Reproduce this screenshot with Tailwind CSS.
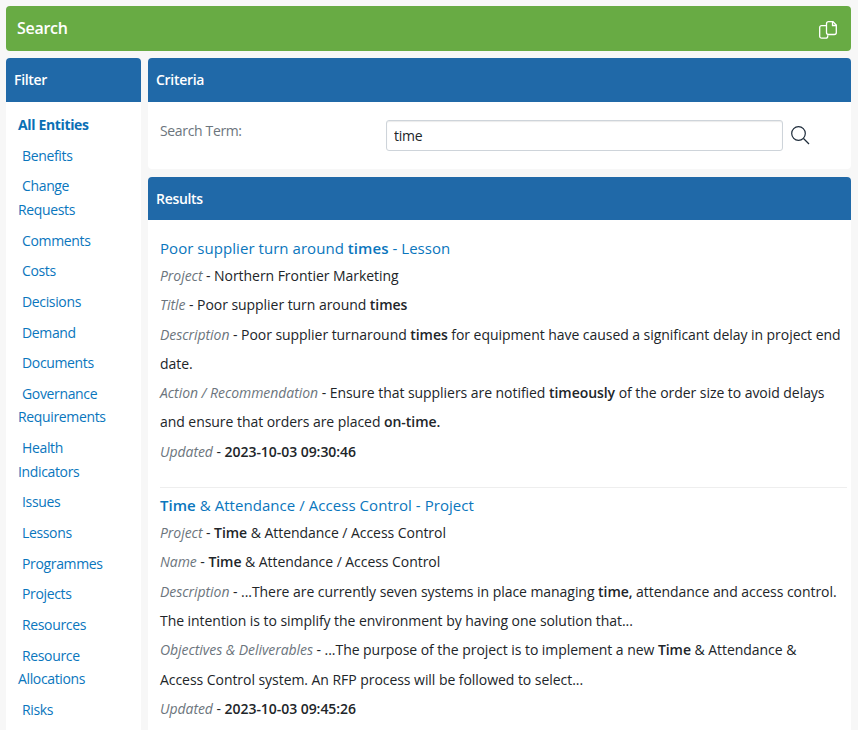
<!DOCTYPE html>
<html lang="en">
  <head>
    <meta charset="UTF-8" />
    <script src="https://cdn.jsdelivr.net/npm/@tailwindcss/browser@4"></script>
    <title>Search</title>
  </head>
  <body class="bg-[#f7f7f7] h-[730px] overflow-hidden font-['Open_Sans',sans-serif] text-[14px] text-[#212529]">
    <div class="pt-[6px] pl-[6px] w-[851px]">
      <!-- page title -->
      <div class="h-[45px] bg-[#68ab44] rounded-[4px] flex items-center justify-between pl-[11px] pr-[14px] text-white">
        <span class="text-[16px] font-semibold tracking-[-0.3px] -mt-[1px]">Search</span>
        <svg class="mt-[3px]" width="18" height="18" viewBox="0 0 18 18" fill="none" stroke="#fff" stroke-width="1.3">
          <path d="M7 4.700H2.500a1.800 1.800 0 0 0-1.800 1.800v8.700a2 2 0 0 0 2 2h4a2 2 0 0 0 2-2v-1" />
          <path d="M9.500 0.700H14l3.300 3.300v7.500a2 2 0 0 1-2 2H9.500a2 2 0 0 1-2-2V2.700a2 2 0 0 1 2-2z" />
          <path d="M13.500 0.700V4.500h3.800" />
        </svg>
      </div>

      <div class="flex gap-[7px] mt-[7px]">
        <!-- filter -->
        <div class="w-[135px] shrink-0 bg-white rounded-t-[4px] h-[700px]">
          <div class="h-[44px] bg-[#2069a8] rounded-t-[4px] flex items-center px-[8px] pb-[1px] text-white font-semibold text-[14px] tracking-[-0.3px]">Filter</div>
          <ul class="pt-[11px] pl-[12px] pr-[25px] text-[#0a76bd] leading-[23.400px] tracking-[-0.35px]">
            <li class="mb-[7.300px] font-bold text-[#0a6fb5]">All Entities</li>
            <li class="mb-[7.300px] indent-[4px]">Benefits</li>
            <li class="mb-[7.300px] indent-[4px]">Change Requests</li>
            <li class="mb-[7.300px] indent-[4px]">Comments</li>
            <li class="mb-[7.300px] indent-[4px]">Costs</li>
            <li class="mb-[7.300px] indent-[4px]">Decisions</li>
            <li class="mb-[7.300px] indent-[4px]">Demand</li>
            <li class="mb-[7.300px] indent-[4px]">Documents</li>
            <li class="mb-[7.300px] indent-[4px]">Governance Requirements</li>
            <li class="mb-[7.300px] indent-[4px]">Health Indicators</li>
            <li class="mb-[7.300px] indent-[4px]">Issues</li>
            <li class="mb-[7.300px] indent-[4px]">Lessons</li>
            <li class="mb-[7.300px] indent-[4px]">Programmes</li>
            <li class="mb-[7.300px] indent-[4px]">Projects</li>
            <li class="mb-[7.300px] indent-[4px]">Resources</li>
            <li class="mb-[7.300px] indent-[4px]">Resource Allocations</li>
            <li class="mb-[7.300px] indent-[4px]">Risks</li>
          </ul>
        </div>

        <div class="flex-1 min-w-0">
          <!-- criteria -->
          <div class="bg-white rounded-[4px] h-[111px]">
            <div class="h-[44px] bg-[#2069a8] rounded-t-[4px] flex items-center px-[8px] pb-[1px] text-white font-semibold text-[14px] tracking-[-0.3px]">Criteria</div>
            <div class="flex pt-[18px] pl-[12px]">
              <label class="w-[226px] text-[#6c757d] leading-[22px] tracking-[-0.35px]">Search Term:</label>
              <input value="time" class="w-[397px] h-[31px] border border-[#ced4da] rounded-[3px] px-[7px] bg-white text-[#212529] tracking-[-0.25px] shadow-[inset_0_1px_1px_rgba(0,0,0,0.08)] outline-none" />
              <svg class="ml-[7px] mt-[5px]" width="20" height="20" viewBox="0 0 20 20" fill="none" stroke="#1d2b3a" stroke-width="1.2">
                <circle cx="8.500" cy="8.500" r="6.800" />
                <path d="M13.500 13.500L19 19" />
              </svg>
            </div>
          </div>

          <!-- results -->
          <div class="bg-white rounded-t-[4px] mt-[8px] h-[560px]">
            <div class="h-[43px] bg-[#2069a8] rounded-t-[4px] flex items-center px-[8px] text-white font-semibold text-[14px] tracking-[-0.3px]">Results</div>
            <div class="pl-[12px] pr-[4px] pt-[15px] leading-[29.300px] tracking-[-0.05px]">
              <div class="pb-[21px] pr-[4px] border-b border-[#eeeeee]">
                <div class="text-[15px] text-[#0a76bd] leading-[26px] tracking-[0.05px]">Poor supplier turn around <b class="font-semibold">times</b> - Lesson</div>
                <div><i class="text-[#6c757d]">Project</i> - Northern Frontier Marketing</div>
                <div><i class="text-[#6c757d]">Title</i> - Poor supplier turn around <b class="font-semibold">times</b></div>
                <div><i class="text-[#6c757d]">Description</i> - Poor supplier turnaround <b class="font-semibold">times</b> for equipment have caused a significant delay in project end date.</div>
                <div><i class="text-[#6c757d]">Action / Recommendation</i> - Ensure that suppliers are notified <b class="font-semibold">timeously</b> of the order size to avoid delays and ensure that orders are placed <b class="font-semibold">on-time.</b></div>
                <div><i class="text-[#6c757d]">Updated</i> - <span class="font-semibold">2023-10-03 09:30:46</span></div>
              </div>
              <div class="pt-[4px] pr-[4px]">
                <div class="text-[15px] text-[#0a76bd] leading-[26px] tracking-[0.05px]"><b class="font-semibold">Time</b> &amp; Attendance / Access Control - Project</div>
                <div><i class="text-[#6c757d]">Project</i> - <b class="font-semibold">Time</b> &amp; Attendance / Access Control</div>
                <div><i class="text-[#6c757d]">Name</i> - <b class="font-semibold">Time</b> &amp; Attendance / Access Control</div>
                <div><i class="text-[#6c757d]">Description</i> - ...There are currently seven systems in place managing <b class="font-semibold">time,</b> attendance and access control. The intention is to simplify the environment by having one solution that...</div>
                <div><i class="text-[#6c757d]">Objectives &amp; Deliverables</i> - ...The purpose of the project is to implement a new <b class="font-semibold">Time</b> &amp; Attendance &amp; Access Control system. An RFP process will be followed to select...</div>
                <div><i class="text-[#6c757d]">Updated</i> - <span class="font-semibold">2023-10-03 09:45:26</span></div>
              </div>
            </div>
          </div>
        </div>
      </div>
    </div>
  </body>
</html>
